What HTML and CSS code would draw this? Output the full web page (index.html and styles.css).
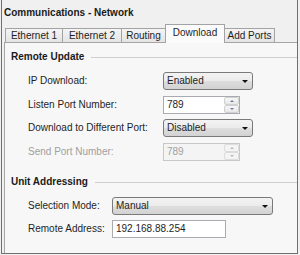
FILE: index.html
```html
<!DOCTYPE html>
<html>
<head>
<meta charset="utf-8">
<link rel="stylesheet" href="styles.css">
</head>
<body>
<div class="window">
  <div class="title">Communications - Network</div>
  <div class="tabs">
    <div class="tab tab-eth1">Ethernet 1</div>
    <div class="tab tab-eth2">Ethernet 2</div>
    <div class="tab tab-routing">Routing</div>
    <div class="tab tab-active tab-download">Download</div>
    <div class="tab tab-last tab-add">Add Ports</div>
  </div>
  <div class="panel">
    <div class="section-head"><span>Remote Update</span><div class="rule"></div></div>
    <div class="form form-remote">
      <div class="label">IP Download:</div>
      <div class="select select-short"><span>Enabled</span><span class="arrow"></span></div>
      <div class="label">Listen Port Number:</div>
      <div class="spin"><span class="spin-value">789</span><div class="spin-buttons"><div class="spin-btn"><span class="up"></span></div><div class="spin-btn"><span class="down"></span></div></div></div>
      <div class="label">Download to Different Port:</div>
      <div class="select select-short"><span>Disabled</span><span class="arrow"></span></div>
      <div class="label label-disabled">Send Port Number:</div>
      <div class="spin spin-disabled"><span class="spin-value">789</span><div class="spin-buttons"><div class="spin-btn"><span class="up"></span></div><div class="spin-btn"><span class="down"></span></div></div></div>
    </div>
    <div class="section-head section-unit"><span>Unit Addressing</span><div class="rule"></div></div>
    <div class="form form-unit">
      <div class="label">Selection Mode:</div>
      <div class="select select-long"><span>Manual</span><span class="arrow"></span></div>
      <div class="label">Remote Address:</div>
      <div class="textbox">192.168.88.254</div>
    </div>
  </div>
</div>
</body>
</html>
```

FILE: styles.css
```css
html, body {
  margin: 0;
  padding: 0;
  background: #f0f0f0;
}
body {
  font-family: "Liberation Sans", Arial, sans-serif;
  font-size: 10px;
  color: #1e1e1e;
}
.window {
  margin-left: 1px;
  width: 295px;
  height: 253px;
  border-left: 1px solid #707070;
  border-right: 1px solid #707070;
  border-bottom: 1px solid #707070;
  background: #f0f0f0;
  display: flex;
  flex-direction: column;
}
.title {
  font-weight: bold;
  line-height: 12px;
  padding: 7px 0 5px 2px;
  color: #1a1a1a;
}
.tabs {
  display: flex;
  align-items: flex-end;
  height: 18px;
  padding-left: 3px;
  position: relative;
  z-index: 2;
}
.tab {
  box-sizing: border-box;
  height: 14px;
  line-height: 13px;
  text-align: center;
  border: 1px solid #a3a3a3;
  border-bottom: none;
  border-right: none;
  background: linear-gradient(#f4f4f4, #e4e4e4);
  color: #1e1e1e;
}
.tab-last { border-right: 1px solid #a3a3a3; border-left: none; }
.tab-active {
  height: 19px;
  margin-bottom: -1px;
  line-height: 16px;
  background: #fbfbfb;
  border-right: 1px solid #a3a3a3;
}
.tab-eth1 { width: 57px; }
.tab-eth2 { width: 59px; }
.tab-routing { width: 44px; }
.tab-download { width: 60px; }
.tab-add { width: 50px; }
.panel {
  flex: 1;
  margin-left: 2px;
  border-left: 1px solid #a5a5a5;
  border-top: 1px solid #a5a5a5;
  background: #f7f7f7;
  padding: 8px 0 0 6px;
}
.section-head {
  display: flex;
  align-items: center;
  gap: 7px;
  font-weight: bold;
  line-height: 12px;
  color: #1a1a1a;
}
.rule {
  flex: 1;
  height: 1px;
  background: #cfcfcf;
}
.section-unit { margin-top: 15.5px; }
.form {
  display: grid;
  align-items: center;
  margin-top: 9px;
  margin-left: 17px;
}
.form-remote {
  grid-template-columns: 135px auto;
  grid-auto-rows: 18px;
  row-gap: 5.5px;
}
.form-unit {
  grid-template-columns: 84px auto;
  grid-auto-rows: 18px;
  row-gap: 5px;
}
.label { line-height: 12px; }
.label-disabled { color: #a0a0a0; }
.select {
  box-sizing: border-box;
  height: 18px;
  border: 1px solid #7a7a7a;
  border-radius: 3px;
  background: linear-gradient(#f3f3f3, #ebebeb 50%, #dedede 50%, #d2d2d2);
  display: flex;
  align-items: center;
  justify-content: space-between;
  padding: 0 3px 0 3px;
  line-height: 12px;
}
.select-short { width: 90px; }
.select-long { width: 161px; }
.arrow {
  width: 0;
  height: 0;
  border-left: 3px solid transparent;
  border-right: 3px solid transparent;
  border-top: 3px solid #111;
  margin-right: 1px;
}
.spin {
  box-sizing: border-box;
  width: 77px;
  height: 18px;
  border: 1px solid #a9abb0;
  background: #fff;
  display: flex;
  align-items: stretch;
}
.spin-value {
  flex: 1;
  padding-left: 3px;
  line-height: 16px;
}
.spin-buttons {
  width: 15px;
  display: flex;
  flex-direction: column;
  gap: 0;
}
.spin-btn {
  flex: 1;
  box-sizing: border-box;
  border: 1px solid #d0d0d0;
  border-radius: 2px;
  background: linear-gradient(#f7f7f7, #e7e7e7);
  display: flex;
  align-items: center;
  justify-content: center;
}
.up {
  width: 0; height: 0;
  border-left: 2px solid transparent;
  border-right: 2px solid transparent;
  border-bottom: 2px solid #6d7f99;
}
.down {
  width: 0; height: 0;
  border-left: 2px solid transparent;
  border-right: 2px solid transparent;
  border-top: 2px solid #6d7f99;
}
.spin-disabled {
  border-color: #c8c8c8;
  background: #f4f4f4;
  color: #a0a0a0;
}
.spin-disabled .up { border-bottom-color: #b8b8b8; }
.spin-disabled .down { border-top-color: #b8b8b8; }
.spin-disabled .spin-btn { border-color: #dcdcdc; background: #f4f4f4; }
.textbox {
  box-sizing: border-box;
  width: 114px;
  height: 18px;
  border: 1px solid #a9abb0;
  background: #fff;
  padding-left: 3px;
  line-height: 16px;
}
```
